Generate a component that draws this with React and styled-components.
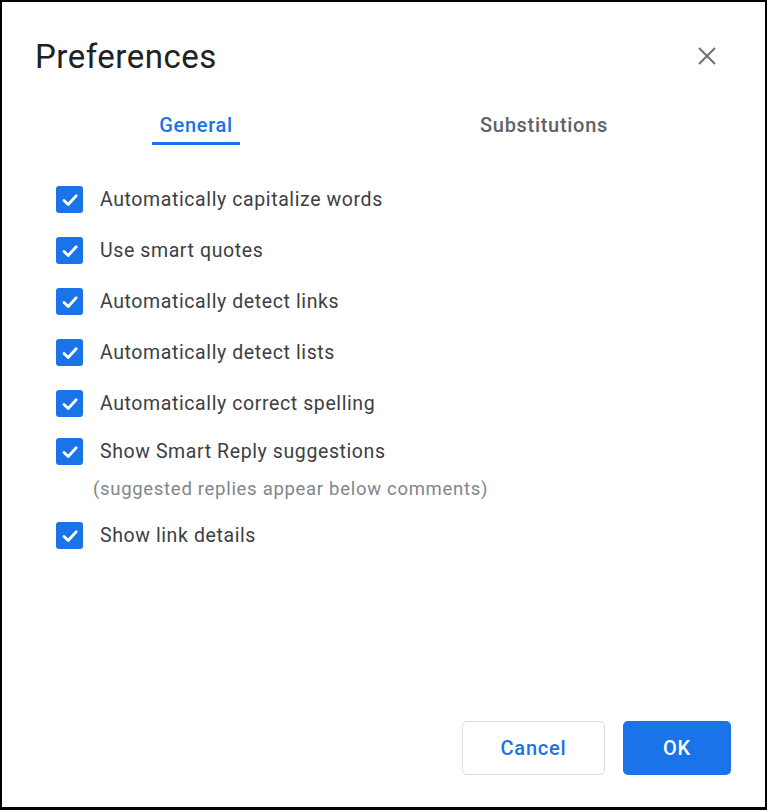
import React from 'react'
import styled, { createGlobalStyle } from 'styled-components'

const GlobalStyle = createGlobalStyle`
  html, body {
    margin: 0;
    padding: 0;
    background: #fff;
  }
  body {
    font-family: Roboto, "Noto Sans", Arial, sans-serif;
  }
`

const options = [
  { label: 'Automatically capitalize words' },
  { label: 'Use smart quotes' },
  { label: 'Automatically detect links' },
  { label: 'Automatically detect lists' },
  { label: 'Automatically correct spelling' },
  { label: 'Show Smart Reply suggestions', note: '(suggested replies appear below comments)' },
  { label: 'Show link details' },
]

export default function App() {
  return (
    <>
      <GlobalStyle />
      <Dialog>
        <Header>
          <Title>Preferences</Title>
          <CloseButton aria-label="Close">
            <svg width="18" height="18" viewBox="0 0 18 18">
              <path d="M1 1 L17 17 M17 1 L1 17" stroke="#6b6f73" strokeWidth="2" fill="none" />
            </svg>
          </CloseButton>
        </Header>

        <Tabs>
          <Tab>
            <TabLabel $active>General</TabLabel>
          </Tab>
          <Tab>
            <TabLabel>Substitutions</TabLabel>
          </Tab>
        </Tabs>

        <OptionList>
          {options.map((o) => (
            <Option key={o.label} $tight={!!o.note}>
              <OptionRow>
                <Checkbox>
                  <svg width="18" height="18" viewBox="0 0 18 18">
                    <path d="M3 9.5 L7.2 13.5 L15.2 4.8" stroke="#fff" strokeWidth="2.8" fill="none" strokeLinecap="round" strokeLinejoin="round" />
                  </svg>
                </Checkbox>
                <Label>{o.label}</Label>
              </OptionRow>
              {o.note && <Note>{o.note}</Note>}
            </Option>
          ))}
        </OptionList>

        <Footer>
          <CancelButton>Cancel</CancelButton>
          <OkButton>OK</OkButton>
        </Footer>
      </Dialog>
    </>
  )
}

const Dialog = styled.div`
  box-sizing: border-box;
  width: 767px;
  height: 810px;
  border: 2px solid #000;
  border-bottom-width: 3px;
  display: flex;
  flex-direction: column;
  background: #fff;
`

const Header = styled.div`
  display: flex;
  align-items: center;
  justify-content: space-between;
  padding: 33px 49px 0 33px;
  height: 42px;
`

const Title = styled.h1`
  margin: 0;
  font-size: 33px;
  font-weight: 400;
  color: #202124;
  letter-spacing: 0.5px;
`

const CloseButton = styled.div`
  width: 18px;
  height: 18px;
  display: flex;
  margin-top: -1px;
`

const Tabs = styled.div`
  display: grid;
  grid-template-columns: 1fr 1fr;
  margin: 36px 47px 0 20px;
`

const Tab = styled.div`
  display: flex;
  justify-content: center;
`

const TabLabel = styled.div`
  font-size: 20px;
  font-weight: 500;
  letter-spacing: 0.7px;
  color: ${(p) => (p.$active ? '#1a73e8' : '#5f6368')};
  padding: 0 7px 5px;
  line-height: 24px;
  border-bottom: 3px solid ${(p) => (p.$active ? '#1a73e8' : 'transparent')};
`

const OptionList = styled.div`
  display: flex;
  flex-direction: column;
  padding: 17px 0 0 54px;
`

const Option = styled.div`
  display: flex;
  flex-direction: column;
  margin-top: ${(p) => (p.$tight ? '21px' : '24px')};
`

const OptionRow = styled.div`
  display: flex;
  align-items: center;
  gap: 17px;
`

const Checkbox = styled.div`
  width: 27px;
  height: 27px;
  border-radius: 3px;
  background: #1a73e8;
  display: flex;
  align-items: center;
  justify-content: center;
`

const Label = styled.span`
  font-size: 19.5px;
  letter-spacing: 0.6px;
  color: #3c4043;
`

const Note = styled.div`
  margin: 15px 0 0 37px;
  font-size: 18.5px;
  line-height: 18px;
  letter-spacing: 0.7px;
  color: #80868b;
`

const Footer = styled.div`
  margin-top: auto;
  display: flex;
  justify-content: flex-end;
  gap: 18px;
  padding: 0 34px 32px 0;
`

const ButtonBase = styled.button`
  box-sizing: border-box;
  height: 54px;
  border-radius: 5px;
  font-family: Roboto, "Noto Sans", Arial, sans-serif;
  font-size: 20px;
  font-weight: 500;
  letter-spacing: 0.8px;
  cursor: pointer;
`

const CancelButton = styled(ButtonBase)`
  width: 143px;
  background: #fff;
  color: #1a73e8;
  border: 1px solid #dadce0;
`

const OkButton = styled(ButtonBase)`
  width: 108px;
  background: #1a73e8;
  color: #fff;
  border: none;
`
